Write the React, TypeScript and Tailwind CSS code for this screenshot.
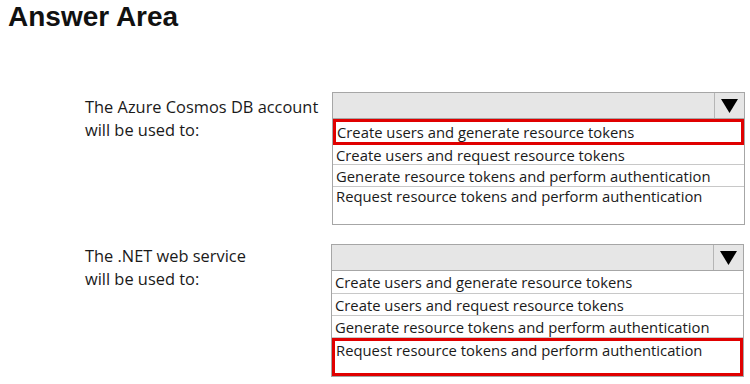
import React from 'react';

const options = [
  'Create users and generate resource tokens',
  'Create users and request resource tokens',
  'Generate resource tokens and perform authentication',
  'Request resource tokens and perform authentication',
];

interface DropdownProps {
  selected: number;
  rowHeights: string[];
}

const Dropdown: React.FC<DropdownProps> = ({ selected, rowHeights }) => {
  return (
    <div className="w-[413px] border border-[#a6a6a6] bg-white">
      {/* Header with arrow */}
      <div className="flex h-[26px] bg-[#e6e6e6] border-b border-[#a6a6a6]">
        <div className="flex-1" />
        <div className="w-[30px] border-l border-[#b5b5b5] flex items-center justify-center">
          <svg width="17" height="14" viewBox="0 0 17 14">
            <polygon points="0,0 17,0 8.5,14" fill="#000" />
          </svg>
        </div>
      </div>
      {options.map((opt, i) => {
        const last = i === options.length - 1;
        return (
          <div
            key={opt}
            className={
              (i === selected ? 'border-[3px] border-[#e00000] pl-[1px] ' : 'border-b border-[#c8c8c8] pl-[3px] ') +
              (last && i !== selected ? 'border-b-0 ' : '') +
              (last ? 'leading-[18px] ' : 'flex items-center leading-[20px] ') +
              rowHeights[i] +
              ' text-[14.8px] text-[#1a1a1a]'
            }
          >
            {opt}
          </div>
        );
      })}
    </div>
  );
};

export default function App() {
  return (
    <div className="w-[750px] h-[384px] bg-white relative font-['Open_Sans',sans-serif]">
      <h1 className="pl-[8px] pt-[1px] text-[28px] leading-[32px] font-bold text-[#111] font-['Liberation_Sans',Arial,sans-serif]">
        Answer Area
      </h1>

      <div className="flex mt-[59px]">
        <div className="w-[85px]" />
        <div className="w-[247px] pt-[3px] text-[16.4px] leading-[23px] text-[#1a1a1a]">
          The Azure Cosmos DB account
          <br />
          will be used to:
        </div>
        <Dropdown selected={0} rowHeights={['h-[26px]', 'h-[20px]', 'h-[22px]', 'h-[37px]']} />
      </div>

      <div className="flex mt-[19px]">
        <div className="w-[85px]" />
        <div className="w-[246px] text-[16.4px] leading-[23px] text-[#1a1a1a]">
          The .NET web service
          <br />
          will be used to:
        </div>
        <Dropdown selected={3} rowHeights={['h-[23px]', 'h-[22px]', 'h-[22px]', 'h-[38px]']} />
      </div>
    </div>
  );
}
